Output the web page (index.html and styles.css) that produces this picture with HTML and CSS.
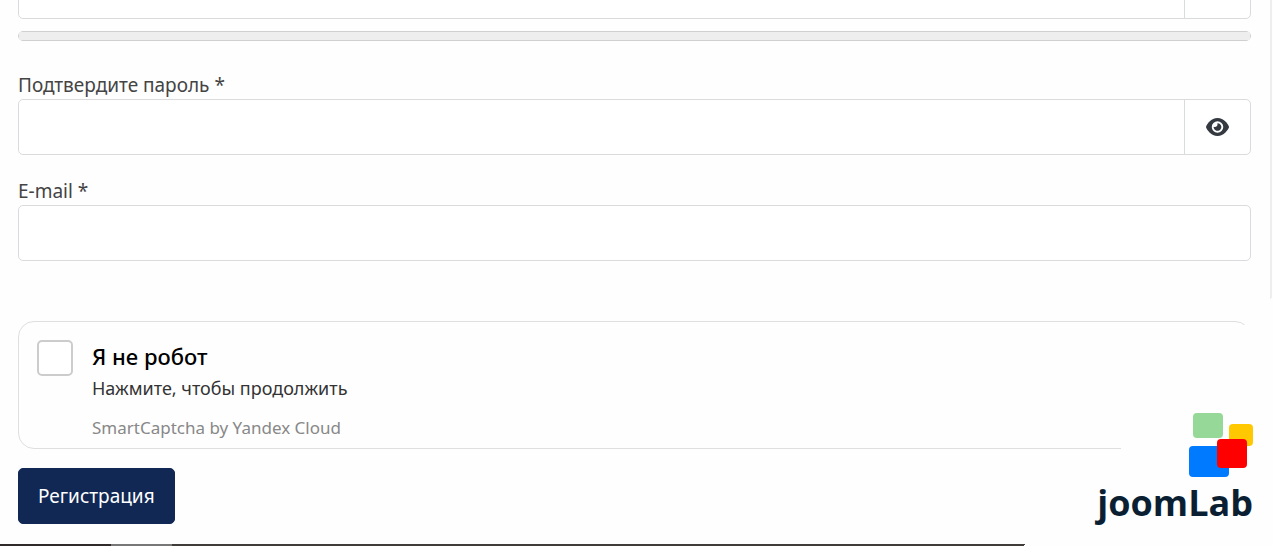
FILE: index.html
```html
<!DOCTYPE html>
<html lang="ru">
<head>
    <meta charset="UTF-8">
    <meta name="viewport" content="width=device-width, initial-scale=1.0">
    <title>Регистрация</title>
    <link rel="stylesheet" href="styles.css">
</head>
<body>
    <main class="page">
        <form class="register-form" id="registerForm">
            <div class="form-group first">
                <div class="input-group">
                    <input type="password" id="password" name="password" aria-label="Пароль" required>
                    <button type="button" class="eye-btn" aria-label="Показать пароль">
                        <svg viewBox="0 0 576 512"><path d="M288 32c-81 0-146 37-193 81C48 156 17 208 3 244c-3 8-3 17 0 25 14 35 45 87 92 131 47 43 112 80 193 80s146-37 193-80c47-44 78-96 93-131 3-8 3-17 0-25-15-36-46-88-93-131-47-44-112-81-193-81zM144 256a144 144 0 1 1 288 0 144 144 0 1 1-288 0zm144-64c0 35-29 64-64 64-7 0-14-1-20-3-6-2-12 2-12 7 0 7 1 14 3 21 14 51 67 82 118 68s82-67 68-118c-11-41-47-69-88-71-6 0-9 6-8 12 2 6 3 13 3 20z"/></svg>
                    </button>
                </div>
                <meter class="password-strength" min="0" max="100" value="0" aria-label="Надёжность пароля"></meter>
            </div>
            <div class="form-group">
                <label for="confirmPassword">Подтвердите пароль *</label>
                <div class="input-group">
                    <input type="password" id="confirmPassword" name="confirmPassword" required>
                    <button type="button" class="eye-btn" aria-label="Показать пароль">
                        <svg viewBox="0 0 576 512"><path d="M288 32c-81 0-146 37-193 81C48 156 17 208 3 244c-3 8-3 17 0 25 14 35 45 87 92 131 47 43 112 80 193 80s146-37 193-80c47-44 78-96 93-131 3-8 3-17 0-25-15-36-46-88-93-131-47-44-112-81-193-81zM144 256a144 144 0 1 1 288 0 144 144 0 1 1-288 0zm144-64c0 35-29 64-64 64-7 0-14-1-20-3-6-2-12 2-12 7 0 7 1 14 3 21 14 51 67 82 118 68s82-67 68-118c-11-41-47-69-88-71-6 0-9 6-8 12 2 6 3 13 3 20z"/></svg>
                    </button>
                </div>
            </div>
            <div class="form-group">
                <label for="email">E-mail *</label>
                <div class="input-group">
                    <input type="email" id="email" name="email" required>
                </div>
            </div>
            <div class="captcha">
                <input type="checkbox" id="captcha" name="captcha" required>
                <div class="captcha-text">
                    <label for="captcha" class="captcha-title">Я не робот</label>
                    <span class="captcha-hint">Нажмите, чтобы продолжить</span>
                    <span class="captcha-brand">SmartCaptcha by Yandex Cloud</span>
                </div>
            </div>
            <button type="submit" class="submit-btn">Регистрация</button>
        </form>
        <div class="bottom-bar"></div>

        <!-- corner logo -->
        <div class="corner">
            <div class="logo">
                <svg class="logo-mark" viewBox="0 0 64 64">
                    <rect x="4" y="0" width="30" height="25" rx="4" fill="#96d898"/>
                    <rect x="40" y="11" width="24" height="22" rx="4" fill="#ffc800"/>
                    <rect x="0" y="33" width="40" height="31" rx="4" fill="#007bff"/>
                    <rect x="28" y="26" width="30" height="29" rx="4" fill="#ff0000"/>
                </svg>
                <span class="logo-name">joomLab</span>
            </div>
        </div>
    </main>
</body>
</html>
```
FILE: styles.css
```css
* {
    box-sizing: border-box;
}
body {
    margin: 0;
    font-family: "Noto Sans", "Open Sans", sans-serif;
    font-size: 19px;
    color: #444;
    background-color: #fefefe;
}
.page {
    position: relative;
    overflow: hidden;
}
.register-form {
    margin-right: 1px;
    padding: 0 19px 20px 18px;
    border-right: 2px solid #eee;
}
.form-group {
    margin-bottom: 22px;
}
.form-group.first {
    margin-top: -37px;
    margin-bottom: 30px;
}
label {
    display: block;
    line-height: 28px;
}
.input-group {
    display: flex;
    height: 56px;
    border: 1px solid #d9dbdc;
    border-radius: 5px;
    background-color: #fff;
}
.input-group input {
    flex: 1;
    min-width: 0;
    padding: 8px 16px;
    border: none;
    background: none;
    font: inherit;
}
.eye-btn {
    display: flex;
    align-items: center;
    justify-content: center;
    width: 66px;
    padding: 0;
    border: none;
    border-left: 1px solid #d9dbdc;
    background: none;
    cursor: pointer;
}
.eye-btn svg {
    width: 23px;
    height: 22px;
    fill: #343a40;
}
.password-strength {
    display: block;
    width: 100%;
    height: 10px;
    margin-top: 12px;
    border: 1px solid #d0d0d0;
    border-radius: 5px;
    background: #eee;
    appearance: none;
}
.password-strength::-webkit-meter-bar {
    height: 8px;
    border: none;
    background: #eee;
}
.captcha {
    display: flex;
    gap: 19px;
    height: 128px;
    margin-top: 60px;
    margin-bottom: 19px;
    padding: 18px;
    border: 1px solid #dfdfdf;
    border-radius: 16px;
}
.captcha input {
    flex: none;
    width: 36px;
    height: 36px;
    margin: 0;
    border: 2px solid #ccc;
    border-radius: 5px;
    background-color: #fff;
    appearance: none;
}
.captcha-text {
    display: flex;
    flex-direction: column;
}
.captcha-title {
    font-size: 22px;
    font-weight: 500;
    line-height: 32px;
    color: #000;
}
.captcha-hint {
    font-size: 18px;
    line-height: 32px;
    color: #333;
}
.captcha-brand {
    margin-top: 12px;
    font-size: 17px;
    line-height: 24px;
    color: #888;
}
.submit-btn {
    display: block;
    height: 56px;
    padding: 0 19px;
    border: 1px solid #112855;
    border-radius: 5px;
    background-color: #112855;
    color: #fff;
    font: inherit;
    cursor: pointer;
}
.bottom-bar {
    height: 2px;
    background: linear-gradient(to right, #302a2a 111px, #777 111px, #777 172px, #403c3a 172px);
}
/* white diagonal corner under the logo */
.corner {
    position: absolute;
    right: 0;
    bottom: 0;
    display: flex;
    align-items: flex-end;
    justify-content: flex-end;
    width: 250px;
    height: 250px;
    padding: 0 20px 17px 0;
    background: linear-gradient(135deg, transparent 50%, #fefefe 50%);
}
.logo {
    display: flex;
    flex-direction: column;
    align-items: flex-end;
}
.logo-mark {
    width: 64px;
    height: 64px;
}
.logo-name {
    font-family: "Open Sans", "Noto Sans", sans-serif;
    font-size: 36px;
    font-weight: 700;
    line-height: 52px;
    color: #0b1f33;
}
```
